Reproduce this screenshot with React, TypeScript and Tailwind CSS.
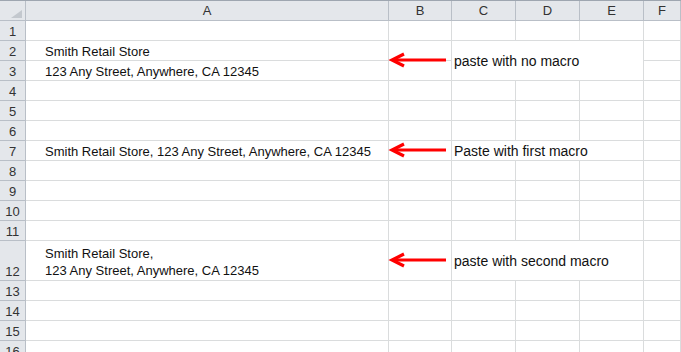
import React from 'react';

const COLS = ['A', 'B', 'C', 'D', 'E', 'F'];

type Row = {
  n: number;
  tall?: boolean;
  a?: string[];
  note?: string;
  merged?: boolean; // C:E over this row and the next one
  skipC?: boolean; // C:E taken by the merged cell above
};

const ROWS: Row[] = [
  { n: 1 },
  { n: 2, a: ['Smith Retail Store'], note: 'paste with no macro', merged: true },
  { n: 3, a: ['123 Any Street, Anywhere, CA 12345'], skipC: true },
  { n: 4 },
  { n: 5 },
  { n: 6 },
  { n: 7, a: ['Smith Retail Store, 123 Any Street, Anywhere, CA 12345'], note: 'Paste with first macro' },
  { n: 8 },
  { n: 9 },
  { n: 10 },
  { n: 11 },
  { n: 12, tall: true, a: ['Smith Retail Store,', '123 Any Street, Anywhere, CA 12345'], note: 'paste with second macro' },
  { n: 13 },
  { n: 14 },
  { n: 15 },
  { n: 16 },
];

const Arrow: React.FC<{ top: number }> = ({ top }) => (
  <svg
    className="absolute left-[388px]"
    style={{ top: top - 8 }}
    width="62"
    height="16"
    viewBox="0 0 62 16"
  >
    <line x1="58" y1="8" x2="5" y2="8" stroke="#ff0000" strokeWidth="3" />
    <polyline points="16,2 4,8 16,14" fill="none" stroke="#ff0000" strokeWidth="3.2" strokeLinejoin="miter" />
  </svg>
);

const hdr = 'bg-[#e4e7eb] border-r border-b border-r-[#b9bfc7] border-b-[#b9bfc7] text-[#333] flex items-center justify-center';
const grid = 'bg-white border-r border-b border-[#dadcdd]';

const App: React.FC = () => {
  return (
    <div className="h-[352px] w-[681px] overflow-hidden bg-white font-['Liberation_Sans',Arial,sans-serif] text-[13px] leading-[14px] text-[#111]">
      <div className="relative border-t border-[#9ea6b0]">
        <div className="grid grid-cols-[26px_363px_63px_64px_64px_64px_1fr] grid-rows-[20px_repeat(11,20px)_40px_repeat(4,20px)]">
          {/* header row */}
          <div className={`${hdr} relative`}>
            <svg className="absolute left-[11px] top-[9px]" width="11" height="8" viewBox="0 0 11 8">
              <polygon points="11,0 11,8 0,8" fill="#c3c8ce" />
            </svg>
          </div>
          {COLS.map((c) => (
            <div key={c} className={`${hdr} pt-[1px]`}>
              {c}
            </div>
          ))}

          {ROWS.map((r) => (
            <React.Fragment key={r.n}>
              <div className={`${hdr} items-end pb-[1px]`}>{r.n}</div>
              <div className={`${grid} flex flex-col justify-end pl-[19px] pb-[1px] ${r.tall ? 'leading-[17px]' : ''}`}>
                {r.a?.map((t) => (
                  <div key={t} className="whitespace-nowrap">
                    {t}
                  </div>
                ))}
              </div>
              <div className={grid} />
              {r.skipC ? null : r.note ? (
                <div
                  className={`${grid} col-span-3 flex items-center pl-[2px] text-[14px] whitespace-nowrap ${r.merged ? 'row-span-2' : ''}`}
                >
                  {r.note}
                </div>
              ) : (
                <>
                  <div className={grid} />
                  <div className={grid} />
                  <div className={grid} />
                </>
              )}
              <div className={grid} />
            </React.Fragment>
          ))}
        </div>

        <Arrow top={59} />
        <Arrow top={149} />
        <Arrow top={259} />
      </div>
    </div>
  );
};

export default App;
